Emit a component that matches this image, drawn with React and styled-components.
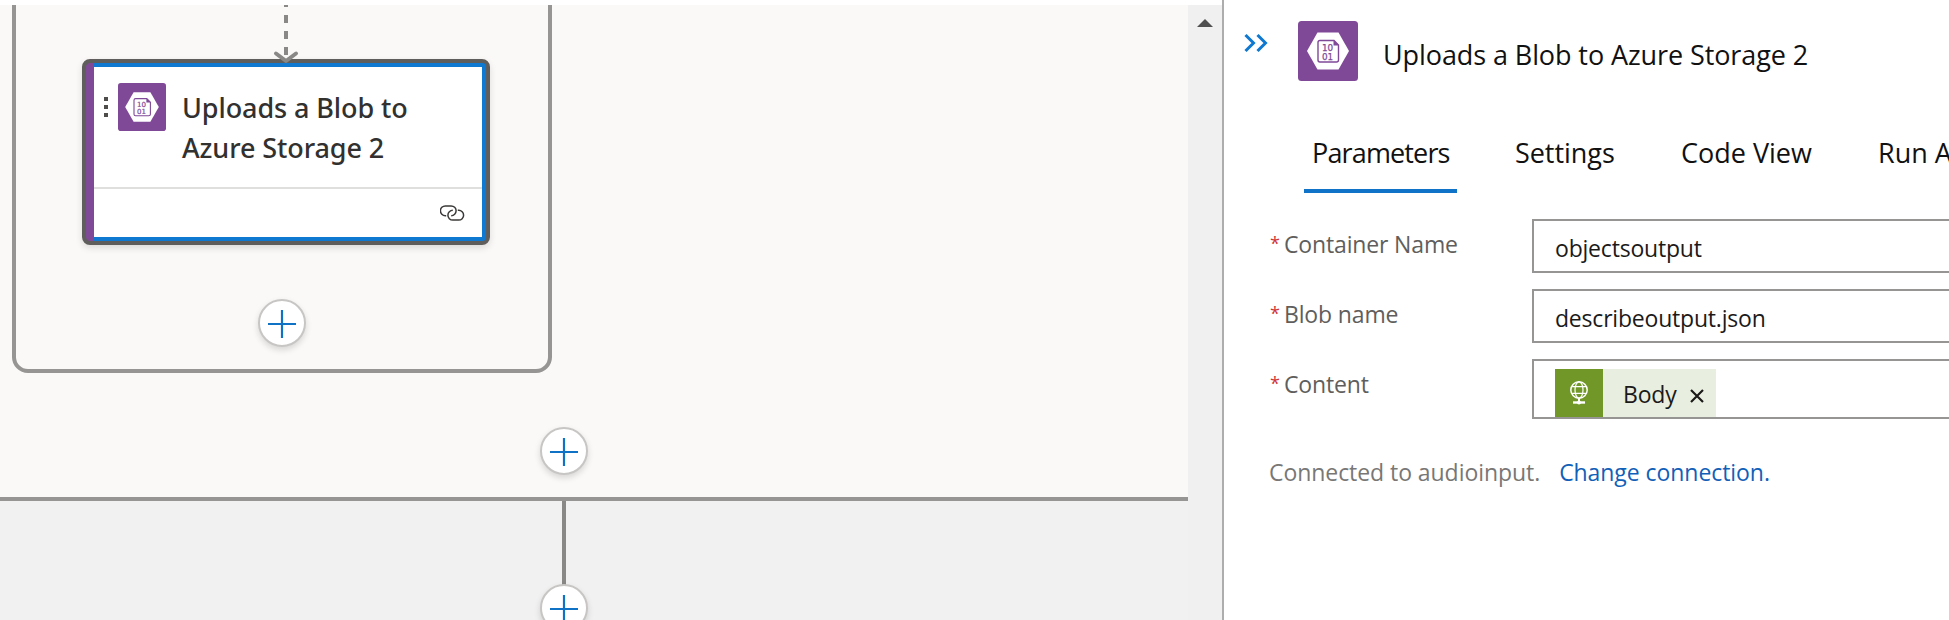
import React from "react";
import styled, { createGlobalStyle } from "styled-components";

const GlobalStyle = createGlobalStyle`
  * { box-sizing: border-box; }
  body {
    margin: 0;
    overflow: hidden;
    background: #fff;
    font-family: "Open Sans", "Noto Sans", sans-serif;
  }
`;

const Page = styled.div`
  display: flex;
  width: 100%;
  height: 620px;
  overflow: hidden;
`;

/* ---------- designer canvas ---------- */

const Designer = styled.section`
  display: flex;
  flex: 0 0 1222px;
  padding-top: 5px;
`;

const Canvas = styled.div`
  position: relative;
  flex: 1;
  overflow: hidden;
  background: #f1f1f1;
`;

const OuterScope = styled.div`
  height: 496px;
  background: #faf9f8;
  border-bottom: 4px solid #979593;
`;

const InnerScope = styled.div`
  position: absolute;
  left: 12px;
  top: -20px;
  width: 540px;
  height: 388px;
  border: 4px solid #979593;
  border-radius: 16px;
`;

const Connector = styled.div`
  position: absolute;
  left: 562px;
  top: 496px;
  width: 4px;
  height: 84px;
  background: #8a8886;
`;

const DashedArrow = styled.svg`
  position: absolute;
  left: 272px;
  top: 0;
  width: 28px;
  height: 60px;
`;

const AddButton = styled.button`
  position: absolute;
  left: ${(p) => p.$x}px;
  top: ${(p) => p.$y}px;
  display: flex;
  align-items: center;
  justify-content: center;
  width: 48px;
  height: 48px;
  padding: 2px 0 0;
  background: #fff;
  border: 2px solid #c8c6c4;
  border-radius: 50%;
  box-shadow: 0 3px 6px rgba(0, 0, 0, 0.14);
`;

const Card = styled.article`
  position: absolute;
  left: 82px;
  top: 54px;
  display: flex;
  width: 408px;
  height: 186px;
  overflow: hidden;
  background: #605e5c;
  border: 4px solid #605e5c;
  border-radius: 8px;
  box-shadow: 0 3px 7px rgba(0, 0, 0, 0.12);
`;

const CardAccent = styled.div`
  flex: 0 0 8px;
  background: #804998;
  border-radius: 4px 0 0 4px;
`;

const CardBody = styled.div`
  display: flex;
  flex: 1;
  flex-direction: column;
  background: #fff;
  border: 4px solid #0f78d0;
  border-left: 0;
  border-radius: 0 3px 3px 0;
`;

const CardHeader = styled.div`
  display: flex;
  flex: 1;
  align-items: flex-start;
  padding: 16px 0 0 10px;
`;

const DragHandle = styled.div`
  display: flex;
  flex-direction: column;
  gap: 4px;
  margin: 14px 10px 0 0;
`;

const HandleDot = styled.i`
  width: 4px;
  height: 4px;
  background: #4f4d4b;
`;

const CardTitle = styled.h2`
  width: 250px;
  margin: 5px 0 0 16px;
  color: #323130;
  font: 550 27px/40px "Noto Sans", sans-serif;
  letter-spacing: -0.1px;
`;

const CardFooter = styled.div`
  display: flex;
  justify-content: flex-end;
  height: 50px;
  padding: 16px 17px 0 0;
  border-top: 2px solid #dfdfde;
`;

/* ---------- scrollbar ---------- */

const Scrollbar = styled.div`
  display: flex;
  flex: 0 0 34px;
  justify-content: center;
  padding-top: 14px;
  background: #f0f0f0;
`;

/* ---------- details panel ---------- */

const Panel = styled.aside`
  flex: 1;
  overflow: hidden;
  background: #fff;
  border-left: 2px solid #adadad;
`;

const PanelHeader = styled.header`
  display: flex;
  align-items: flex-start;
  height: 133px;
  padding: 21px 0 0 20px;
`;

const CollapseButton = styled.button`
  display: flex;
  margin: 12px 30px 0 0;
  padding: 0;
  background: none;
  border: 0;
`;

const PanelTitle = styled.h1`
  margin: 16px 0 0 25px;
  color: #111;
  font-size: 27px;
  font-weight: 400;
  line-height: 36px;
  letter-spacing: -0.09px;
`;

const TabList = styled.nav`
  display: flex;
  gap: 48px;
  width: 900px;
  padding-left: 80px;
`;

const Tab = styled.button`
  flex: 0 0 ${(p) => p.$width}px;
  height: 60px;
  padding: 2px 0 18px ${(p) => (p.$active ? 8 : 10)}px;
  background: none;
  border: 0;
  border-bottom: 4px solid ${(p) => (p.$active ? "#1073c8" : "transparent")};
  color: #111;
  font-family: inherit;
  font-size: 27px;
  line-height: 36px;
  letter-spacing: ${(p) => p.$tracking}px;
  text-align: left;
  white-space: nowrap;
`;

const Form = styled.form`
  display: flex;
  flex-direction: column;
  gap: 16px;
  width: 900px;
  padding: 26px 0 0 46px;
`;

const Field = styled.div`
  display: grid;
  grid-template-columns: 262px 1fr;
`;

const FieldLabel = styled.label`
  display: flex;
  padding-top: 10px;
  color: #605e5c;
  font-size: 23px;
  line-height: 30px;
  letter-spacing: -0.15px;
`;

const Required = styled.span`
  width: 14px;
  margin-top: -1px;
  color: #d13438;
  font-size: 18px;
`;

const ValueBox = styled.div`
  height: ${(p) => (p.$tall ? 60 : 54)}px;
  padding: ${(p) => (p.$tall ? "8px" : "12px")} 0 0 21px;
  border: 2px solid #979593;
  color: #1b1a19;
  font-size: 23px;
  line-height: 30px;
  letter-spacing: -0.2px;
`;

const Token = styled.span`
  display: inline-flex;
  align-items: center;
  width: 161px;
  height: 48px;
  background: #e8efe0;
`;

const TokenIcon = styled.span`
  display: flex;
  align-items: center;
  justify-content: center;
  width: 48px;
  height: 48px;
  background: #709727;
`;

const TokenText = styled.span`
  width: 67px;
  padding: 2px 0 0 20px;
`;

const TokenRemove = styled.svg`
  margin: 5px 0 0 20px;
`;

const Connection = styled.p`
  display: flex;
  gap: 19px;
  margin: 38px 0 0 45px;
  color: #797775;
  font-size: 23px;
  line-height: 30px;
  letter-spacing: -0.06px;
  white-space: nowrap;
`;

const ChangeLink = styled.a`
  color: #1160b7;
`;

const BlobSvg = styled.svg`
  flex: none;
  display: block;
`;

function BlobIcon({ width, height }) {
  return (
    <BlobSvg width={width} height={height} viewBox="0 0 60 60">
      <rect width="60" height="60" rx="3.5" fill="#804998" />
      <path d="M19.500 11.500h21L51 30 40.500 48.500h-21L9 30z" fill="#fff" />
      <path
        d="M22 19.500h14l4.500 4.500v15a2 2 0 0 1-2 2H22a2 2 0 0 1-2-2V21.500a2 2 0 0 1 2-2z"
        fill="none"
        stroke="#804998"
        strokeWidth="1.400"
      />
      <path d="M35.500 19v5.500H41z" fill="#804998" />
      <g fill="#804998" fontFamily="'DejaVu Sans', sans-serif" fontSize="8.800" textAnchor="middle" stroke="#804998" strokeWidth="0.250">
        <text x="29.500" y="29.700">10</text>
        <text x="29.500" y="38.500">01</text>
      </g>
    </BlobSvg>
  );
}

function LinkIcon() {
  return (
    <svg width="25" height="16" viewBox="0 0 25 16" fill="none" stroke="#3b3a39" strokeWidth="1.500">
      <path d="M6.200 10.700H5.300A4.900 4.900 0 0 1 5.300 .9h5.900a4.900 4.900 0 0 1 0 9.800" />
      <path d="M17.800 5.300h.9a4.900 4.900 0 0 1 0 9.800h-5.900a4.900 4.900 0 0 1 0-9.800" />
    </svg>
  );
}

function PlusIcon() {
  return (
    <svg width="28" height="28" viewBox="0 0 28 28" stroke="#0f72c4" strokeWidth="2.200">
      <path d="M14 0v28M0 14h28" />
    </svg>
  );
}

function GlobeIcon() {
  return (
    <svg width="18" height="24" viewBox="0 0 18 24" fill="none" stroke="#fff" strokeWidth="1.200">
      <circle cx="9" cy="9" r="8.200" strokeWidth="1.500" />
      <ellipse cx="9" cy="9" rx="4" ry="8.200" />
      <path d="M1.800 5.700h14.400M1.800 12.300h14.400" />
      <path d="M9 17v4" strokeWidth="2" />
      <path d="M3 21.500h12" strokeWidth="2.400" />
      <circle cx="9" cy="21.500" r="2" fill="#fff" stroke="none" />
    </svg>
  );
}

const tabs = [
  { label: "Parameters", width: 153, tracking: -0.85, active: true },
  { label: "Settings", width: 118, tracking: -0.05 },
  { label: "Code View", width: 149, tracking: 0 },
  { label: "Run After", width: 140, tracking: 0 },
];

const addButtons = [
  { x: 258, y: 294 },
  { x: 540, y: 422 },
  { x: 540, y: 579 },
];

export default function App() {
  return (
    <Page>
      <GlobalStyle />
      <Designer>
        <Canvas>
          <OuterScope />
          <InnerScope />
          <Connector />
          <Card>
            <CardAccent />
            <CardBody>
              <CardHeader>
                <DragHandle>
                  <HandleDot />
                  <HandleDot />
                  <HandleDot />
                </DragHandle>
                <BlobIcon width={48} height={48} />
                <CardTitle>Uploads a Blob to Azure Storage 2</CardTitle>
              </CardHeader>
              <CardFooter>
                <LinkIcon />
              </CardFooter>
            </CardBody>
          </Card>
          <DashedArrow viewBox="0 0 28 60" fill="none" stroke="#8a8886" strokeWidth="4">
            <path d="M14 -6V50" strokeDasharray="8 8" />
            <path d="M4 48.500l10 7.500 10-7.500" strokeLinecap="round" strokeLinejoin="round" />
          </DashedArrow>
          {addButtons.map((b) => (
            <AddButton key={`${b.x}-${b.y}`} $x={b.x} $y={b.y} aria-label="Add">
              <PlusIcon />
            </AddButton>
          ))}
        </Canvas>
        <Scrollbar>
          <svg width="16" height="8" viewBox="0 0 16 8">
            <path d="M8 0l8 8H0z" fill="#505050" />
          </svg>
        </Scrollbar>
      </Designer>

      <Panel>
        <PanelHeader>
          <CollapseButton aria-label="Collapse">
            <svg width="24" height="20" viewBox="0 0 24 20" fill="none" stroke="#0f78d0" strokeWidth="3">
              <path d="M1.500 2L9.500 10l-8 8M13.500 2L21.500 10l-8 8" />
            </svg>
          </CollapseButton>
          <BlobIcon width={60} height={60} />
          <PanelTitle>Uploads a Blob to Azure Storage 2</PanelTitle>
        </PanelHeader>
        <TabList>
          {tabs.map((t) => (
            <Tab key={t.label} $width={t.width} $tracking={t.tracking} $active={t.active}>
              {t.label}
            </Tab>
          ))}
        </TabList>
        <Form>
          <Field>
            <FieldLabel>
              <Required>*</Required>Container Name
            </FieldLabel>
            <ValueBox>objectsoutput</ValueBox>
          </Field>
          <Field>
            <FieldLabel>
              <Required>*</Required>Blob name
            </FieldLabel>
            <ValueBox>describeoutput.json</ValueBox>
          </Field>
          <Field>
            <FieldLabel>
              <Required>*</Required>Content
            </FieldLabel>
            <ValueBox $tall>
              <Token>
                <TokenIcon>
                  <GlobeIcon />
                </TokenIcon>
                <TokenText>Body</TokenText>
                <TokenRemove width="14" height="14" viewBox="0 0 14 14" stroke="#1b1a19" strokeWidth="2.200">
                  <path d="M1 1l12 12M13 1L1 13" />
                </TokenRemove>
              </Token>
            </ValueBox>
          </Field>
        </Form>
        <Connection>
          <span>Connected to audioinput.</span>
          <ChangeLink>Change connection.</ChangeLink>
        </Connection>
      </Panel>
    </Page>
  );
}
